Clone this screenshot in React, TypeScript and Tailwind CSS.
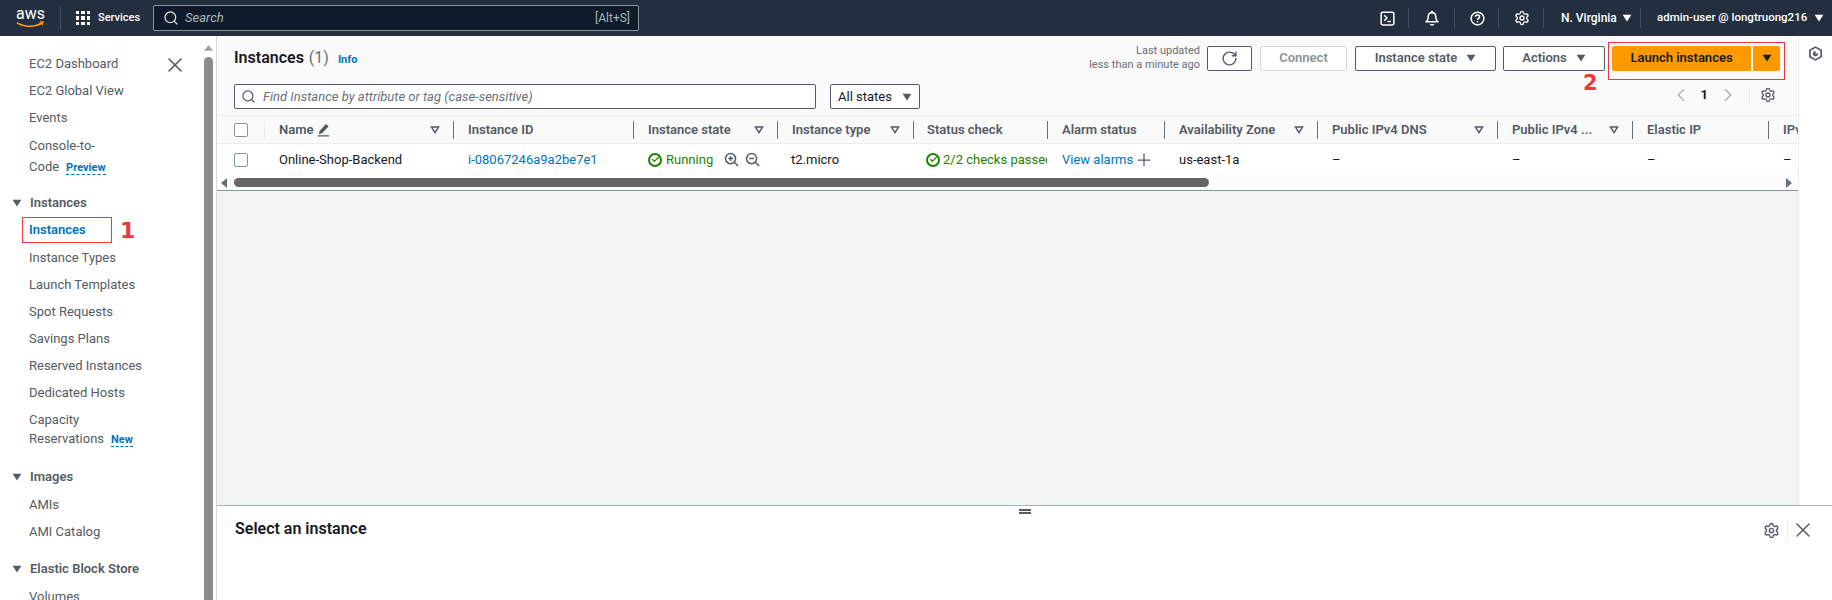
import { Check, ChevronLeft, ChevronRight, Plus, RotateCw, Search, Settings, X } from "lucide-react";

const columns = [
  { label: "Name", width: "w-[188px]", pad: "pl-[13px]", filter: true },
  { label: "Instance ID", width: "w-[180px]", pad: "pl-[14px]", filter: false },
  { label: "Instance state", width: "w-[144px]", pad: "pl-[14px]", filter: true },
  { label: "Instance type", width: "w-[136px]", pad: "pl-[14px]", filter: true },
  { label: "Status check", width: "w-[134px]", pad: "pl-[13px]", filter: false },
  { label: "Alarm status", width: "w-[117px]", pad: "pl-[14px]", filter: false },
  { label: "Availability Zone", width: "w-[153px]", pad: "pl-[14px]", filter: true },
  { label: "Public IPv4 DNS", width: "w-[180px]", pad: "pl-[14px]", filter: true },
  { label: "Public IPv4 ...", width: "w-[135px]", pad: "pl-[14px]", filter: true },
  { label: "Elastic IP", width: "w-[136px]", pad: "pl-[14px]", filter: false },
  { label: "IPv6", width: "w-[100px]", pad: "pl-[14px]", filter: false },
];

function Caret({ className = "" }: { className?: string }) {
  return (
    <svg viewBox="0 0 12 10" className={`h-[8px] w-[10px] shrink-0 ${className}`} fill="currentColor">
      <path d="M0.5 1h11L6 9.5z" />
    </svg>
  );
}

function FilterCaret() {
  return (
    <svg viewBox="0 0 12 10" className="h-[8px] w-[10px] shrink-0 text-[#545b64]" fill="none" stroke="currentColor" strokeWidth="1.8">
      <path d="M1.5 1.2h9L6 8.3z" />
    </svg>
  );
}

function StatusIcon() {
  return (
    <span className="flex h-[14px] w-[14px] shrink-0 items-center justify-center rounded-full border-2 border-[#1d8102] text-[#1d8102]">
      <Check size={9} strokeWidth={3} />
    </span>
  );
}

function Checkbox() {
  return <span className="block h-[14px] w-[14px] rounded-[2px] border border-[#879596] bg-white" />;
}

function ZoomIcon({ plus }: { plus?: boolean }) {
  return (
    <svg viewBox="0 0 16 16" className="h-[15px] w-[15px] text-[#545b64]" fill="none" stroke="currentColor" strokeWidth="1.6">
      <circle cx="7" cy="7" r="5.4" />
      <path d="M11 11l4 4M4.5 7h5" />
      {plus && <path d="M7 4.5v5" />}
    </svg>
  );
}

function NavItem({ label }: { label: string }) {
  return <div className="mb-[8px] pl-[29px] text-[13px] leading-[19px] text-[#545b64]">{label}</div>;
}

function NavSection({ label, className = "mt-[18px]" }: { label: string; className?: string }) {
  return (
    <div className={`mb-[9px] flex items-center gap-[8px] pl-[12px] text-[13px] font-semibold leading-[19px] text-[#545b64] ${className}`}>
      <Caret />
      {label}
    </div>
  );
}

function Sidebar() {
  return (
    <aside className="relative flex w-[217px] shrink-0 border-r border-[#d5dbdb] bg-white">
      <nav className="min-w-0 flex-1 overflow-hidden pt-[18px]">
        <NavItem label="EC2 Dashboard" />
        <NavItem label="EC2 Global View" />
        <NavItem label="Events" />
        <div className="pl-[29px] text-[13px] leading-[21px] text-[#545b64]">
          Console-to-
          <br />
          Code
          <span className="ml-[7px] border-b border-dashed border-[#0073bb] text-[11px] font-bold text-[#0073bb]">Preview</span>
        </div>
        <NavSection label="Instances" className="mt-[15px]" />
        <div className="relative mb-[5px] ml-[22px] -mt-[4px] h-[26px] w-[90px] border border-[#f0353b] pl-[6px] text-[13px] font-semibold leading-[24px] text-[#0073bb]">
          Instances
          <span className="absolute left-[97px] top-[2px] font-['DejaVu_Sans'] text-[22px] font-bold leading-[22px] text-[#f0353b]">1</span>
        </div>
        <NavItem label="Instance Types" />
        <NavItem label="Launch Templates" />
        <NavItem label="Spot Requests" />
        <NavItem label="Savings Plans" />
        <NavItem label="Reserved Instances" />
        <NavItem label="Dedicated Hosts" />
        <div className="pl-[29px] text-[13px] leading-[19px] text-[#545b64]">
          Capacity
          <br />
          Reservations
          <span className="ml-[7px] border-b border-dashed border-[#0073bb] text-[11px] font-bold text-[#0073bb]">New</span>
        </div>
        <NavSection label="Images" />
        <NavItem label="AMIs" />
        <NavItem label="AMI Catalog" />
        <NavSection label="Elastic Block Store" />
        <NavItem label="Volumes" />
      </nav>
      <button className="absolute left-[163px] top-[17px] text-[#545b64]">
        <X size={24} strokeWidth={1.6} />
      </button>
      <div className="mr-[3px] flex w-[9px] shrink-0 flex-col items-center pt-[9px]">
        <svg viewBox="0 0 10 6" className="h-[6px] w-[9px] text-[#a0a0a0]" fill="currentColor">
          <path d="M0 6l5-6 5 6z" />
        </svg>
        <div className="mt-[6px] w-full flex-1 rounded-t-full bg-[#8c8c8c]" />
      </div>
    </aside>
  );
}

function OutlineButton({ label, className }: { label: string; className: string }) {
  return (
    <button className={`flex h-[25px] items-center justify-center gap-[9px] rounded-[2px] border border-[#545b64] bg-white text-[13px] font-semibold text-[#545b64] ${className}`}>
      {label}
      <Caret />
    </button>
  );
}

function Toolbar() {
  return (
    <div className="pl-[17px] pr-[18px] pt-[8px]">
      <div className="flex items-center justify-between">
        <div className="flex items-baseline">
          <h1 className="text-[16px] font-semibold text-[#16191f]">Instances</h1>
          <span className="ml-[5px] text-[16px] text-[#687078]">(1)</span>
          <span className="ml-[9px] text-[11px] font-bold text-[#0073bb]">Info</span>
        </div>
        <div className="flex items-center">
          <div className="mr-[7px] text-right text-[11px] leading-[14px] text-[#687078]">
            Last updated
            <br />
            less than a minute ago
          </div>
          <button className="flex h-[25px] w-[45px] items-center justify-center rounded-[2px] border border-[#545b64] bg-white text-[#545b64]">
            <RotateCw size={17} strokeWidth={2} />
          </button>
          <button className="ml-[8px] h-[25px] w-[87px] rounded-[2px] border border-[#d5dbdb] bg-white text-[13px] font-semibold text-[#879596]">
            Connect
          </button>
          <OutlineButton label="Instance state" className="ml-[8px] w-[141px]" />
          <OutlineButton label="Actions" className="ml-[7px] w-[102px]" />
          <div className="relative ml-[7px] flex gap-[2px]">
            <button className="h-[25px] w-[139px] rounded-l-[2px] bg-[#ff9900] text-[13px] font-semibold text-[#16191f]">Launch instances</button>
            <button className="flex h-[25px] w-[27px] items-center justify-center rounded-r-[2px] bg-[#ff9900] text-[#16191f]">
              <Caret />
            </button>
            <span className="pointer-events-none absolute -bottom-[9px] -left-[4px] -right-[5px] -top-[4px] border border-[#f0353b]" />
            <span className="absolute -left-[29px] top-[27px] font-['DejaVu_Sans'] text-[21px] font-bold leading-[21px] text-[#f0353b]">2</span>
          </div>
        </div>
      </div>
      <div className="mt-[12px] flex items-start justify-between">
        <div className="flex gap-[14px]">
          <div className="flex h-[25px] w-[582px] items-center gap-[7px] rounded-[2px] border border-[#545b64] bg-white px-[6px]">
            <Search size={15} className="text-[#545b64]" strokeWidth={2} />
            <span className="text-[13px] italic text-[#687078]">Find Instance by attribute or tag (case-sensitive)</span>
          </div>
          <button className="flex h-[25px] w-[90px] items-center justify-center gap-[10px] rounded-[2px] border border-[#545b64] bg-white text-[13px] text-[#16191f]">
            All states
            <Caret className="text-[#545b64]" />
          </button>
        </div>
        <div className="flex items-center pr-[4px]">
          <ChevronLeft size={22} className="text-[#aab7b8]" strokeWidth={1.7} />
          <span className="mx-[9px] text-[13px] font-bold text-[#16191f]">1</span>
          <ChevronRight size={22} className="text-[#aab7b8]" strokeWidth={1.7} />
          <span className="mx-[10px] h-[18px] w-px bg-[#eaeded]" />
          <Settings size={16} className="text-[#545b64]" strokeWidth={2} />
        </div>
      </div>
    </div>
  );
}

function Table() {
  return (
    <div className="mt-[6px] border-b border-[#879596]">
      <div className="flex h-[29px] items-center border-b border-t border-[#eaeded] bg-[#fafafa]">
        <div className="flex w-[48px] shrink-0 items-center pl-[17px]">
          <Checkbox />
        </div>
        <div className="h-[17px] w-0 -translate-x-[1px] border-l border-[#eaeded]" />
        {columns.map((col, i) => (
          <div
            key={col.label}
            className={`flex h-[18px] shrink-0 items-center justify-between ${col.width} ${col.pad} ${i === columns.length - 1 ? "" : "border-r border-[#687078]"} pr-[13px] text-[13px] font-semibold text-[#545b64]`}
          >
            <span className="flex items-center gap-[3px] whitespace-nowrap">
              {col.label}
              {i === 0 && (
                <svg viewBox="0 0 16 16" className="h-[15px] w-[15px]" fill="currentColor">
                  <path d="M10.5 2l3 2.5-7 7.5-3.5 1 .8-3.5zM2 14.2h12v1.3H2z" />
                </svg>
              )}
            </span>
            {col.filter && <FilterCaret />}
          </div>
        ))}
      </div>
      <div className="flex h-[31px] items-center overflow-hidden bg-white text-[13px] text-[#16191f]">
        <div className="flex w-[48px] shrink-0 items-center pl-[17px]">
          <Checkbox />
        </div>
        <div className="w-[188px] shrink-0 pl-[14px]">Online-Shop-Backend</div>
        <div className="w-[180px] shrink-0 pl-[15px] text-[#0073bb]">i-08067246a9a2be7e1</div>
        <div className="flex w-[144px] shrink-0 items-center pl-[15px]">
          <StatusIcon />
          <span className="ml-[4px] text-[#1d8102]">Running</span>
          <span className="ml-[11px]">
            <ZoomIcon plus />
          </span>
          <span className="ml-[6px]">
            <ZoomIcon />
          </span>
        </div>
        <div className="w-[136px] shrink-0 pl-[14px]">t2.micro</div>
        <div className="flex w-[134px] shrink-0 items-center overflow-hidden whitespace-nowrap pl-[13px] text-[#1d8102]">
          <StatusIcon />
          <span className="ml-[3px]">2/2 checks passed</span>
        </div>
        <div className="flex w-[117px] shrink-0 items-center pl-[15px] text-[#0073bb]">
          <span className="whitespace-nowrap">View alarms</span>
          <Plus size={20} className="ml-[1px] shrink-0 text-[#545b64]" strokeWidth={1.5} />
        </div>
        <div className="w-[153px] shrink-0 pl-[15px]">us-east-1a</div>
        <div className="w-[180px] shrink-0 pl-[15px]">–</div>
        <div className="w-[135px] shrink-0 pl-[15px]">–</div>
        <div className="w-[136px] shrink-0 pl-[15px]">–</div>
        <div className="w-[100px] shrink-0 pl-[15px]">–</div>
      </div>
      <div className="flex h-[15px] items-center bg-[#fcfcfc] pl-[4px] pr-[4px]">
        <svg viewBox="0 0 6 10" className="h-[10px] w-[6px] text-[#687078]" fill="currentColor">
          <path d="M6 0v10L0 5z" />
        </svg>
        <div className="ml-[7px] h-[9px] w-[975px] rounded-full bg-[#666666]" />
        <svg viewBox="0 0 6 10" className="ml-auto mr-[2px] h-[10px] w-[6px] text-[#687078]" fill="currentColor">
          <path d="M0 0v10l6-5z" />
        </svg>
      </div>
    </div>
  );
}

function TopCell({ className, children }: { className: string; children: React.ReactNode }) {
  return (
    <div className={`relative flex h-full items-center after:absolute after:right-0 after:top-[8px] after:h-[20px] after:w-px after:bg-[#414d5c] ${className}`}>
      {children}
    </div>
  );
}

function TopBar() {
  return (
    <header className="flex h-[36px] shrink-0 items-center bg-[#232f3e] text-[12px] text-white">
      <div className="relative ml-[16px] h-[24px] w-[29px]">
        <span className="absolute left-0 top-[-2px] text-[16px] leading-[20px] text-white">aws</span>
        <svg viewBox="0 0 30 8" className="absolute left-0 top-[15px] h-[8px] w-[29px]" fill="none" stroke="#ff9900" strokeWidth="1.8">
          <path d="M1 1.5c7 5 18 5 26 .5" />
          <path d="M24.5 .8h3.5l-1 3.4" strokeWidth="1.3" />
        </svg>
      </div>
      <span className="ml-[15px] h-[23px] w-px bg-[#414d5c]" />
      <div className="ml-[15px] grid h-[14px] w-[14px] grid-cols-3 gap-[2px]">
        {Array.from({ length: 9 }).map((_, i) => (
          <span key={i} className="bg-white" />
        ))}
      </div>
      <span className="ml-[8px] w-[55px] text-[11px] font-medium">Services</span>
      <div className="flex h-[26px] w-[486px] items-center rounded-[2px] border border-[#879596] bg-[#0f1b2a] pl-[9px] pr-[8px]">
        <Search size={16} className="text-[#d5dbdb]" strokeWidth={2} />
        <span className="ml-[6px] text-[13px] italic text-[#aab7b8]">Search</span>
        <span className="ml-auto text-[12px] text-[#aab7b8]">[Alt+S]</span>
      </div>
      <div className="ml-auto flex h-full items-center">
        <TopCell className="w-[44px] justify-center">
          <svg viewBox="0 0 16 16" className="h-[15px] w-[15px]" fill="none" stroke="white" strokeWidth="1.6">
            <rect x="1.2" y="1.2" width="13.6" height="13.6" rx="1.8" />
            <path d="M4.5 4.6L7.4 7.5 4.5 10.4M8 11.3h3.5" />
          </svg>
        </TopCell>
        <TopCell className="w-[46px] justify-center">
          <svg viewBox="0 0 16 16" className="h-[16px] w-[16px]" fill="white">
            <path d="M8 .8a1.2 1.2 0 0 1 1.2 1.2c2.2.5 3.3 2.3 3.3 4.5 0 2 .5 3.6 2.2 5.1v1H1.3v-1C3 10.1 3.5 8.5 3.5 6.5 3.5 4.3 4.6 2.5 6.8 2A1.2 1.2 0 0 1 8 .8zM5.8 14h4.4c0 1-1 1.7-2.2 1.7S5.8 15 5.8 14z" />
            <path d="M8 3.6c-1.9 0-3 1.3-3 3 0 1.8-.4 3.3-1.4 4.5h8.8C11.4 9.9 11 8.4 11 6.6c0-1.7-1.1-3-3-3z" fill="#232f3e" />
          </svg>
        </TopCell>
        <TopCell className="w-[44px] justify-center">
          <svg viewBox="0 0 16 16" className="h-[15px] w-[15px]" fill="none" stroke="white" strokeWidth="1.6">
            <circle cx="8" cy="8" r="6.8" />
            <path d="M5.8 6.2c0-1.3 1-2 2.2-2s2.2.8 2.2 1.9c0 1.7-2.2 1.7-2.2 3.4M8 10.8v1.4" />
          </svg>
        </TopCell>
        <TopCell className="w-[45px] justify-center">
          <Settings size={16} strokeWidth={2} />
        </TopCell>
        <TopCell className="w-[97px] gap-[5px] pl-[17px]">
          <span className="whitespace-nowrap font-medium">N. Virginia</span>
          <Caret className="h-[6px] w-[8px]" />
        </TopCell>
        <div className="flex h-full w-[191px] items-center pl-[16px]">
          <span className="whitespace-nowrap text-[11.5px] font-medium">admin-user @ longtruong216</span>
          <Caret className="ml-[7px] h-[6px] w-[8px]" />
        </div>
      </div>
    </header>
  );
}

export default function App() {
  return (
    <div className="flex h-[600px] w-full flex-col overflow-hidden bg-white font-['Roboto',sans-serif]">
      <TopBar />
      <div className="flex min-h-0 flex-1">
        <Sidebar />
        <div className="flex min-w-0 flex-1 flex-col">
          <div className="flex min-h-0 flex-1">
            <main className="flex w-[1581px] shrink-0 flex-col overflow-hidden bg-[#f2f3f3]">
              <div className="bg-[#fafafa]">
                <Toolbar />
                <Table />
              </div>
            </main>
            <div className="flex flex-1 justify-center border-l border-[#eaeded] bg-white pt-[10px]">
              <svg viewBox="0 0 16 16" className="h-[15px] w-[15px] text-[#545b64]" fill="none" stroke="currentColor" strokeWidth="1.8">
                <path d="M8 1.2l6 3.4v6.8l-6 3.4-6-3.4V4.6z" />
                <path d="M8 5.2a2.8 2.8 0 1 0 2.8 2.8H8z" fill="currentColor" stroke="none" />
              </svg>
            </div>
          </div>
          <section className="relative flex h-[95px] shrink-0 items-start justify-between border-t border-[#aab7b8] bg-white pl-[18px] pr-[17px] pt-[11px]">
            <h2 className="text-[16px] font-semibold leading-[24px] text-[#16191f]">Select an instance</h2>
            <span className="absolute left-[802px] top-[3px] h-[5px] w-[12px] border-b-2 border-t-2 border-[#545b64]" />
            <div className="flex items-center pt-[1px]">
              <Settings size={17} className="text-[#545b64]" strokeWidth={2} />
              <span className="ml-[7px] mr-[3px] h-[21px] w-px bg-[#eaeded]" />
              <X size={24} className="text-[#545b64]" strokeWidth={1.5} />
            </div>
          </section>
        </div>
      </div>
    </div>
  );
}
